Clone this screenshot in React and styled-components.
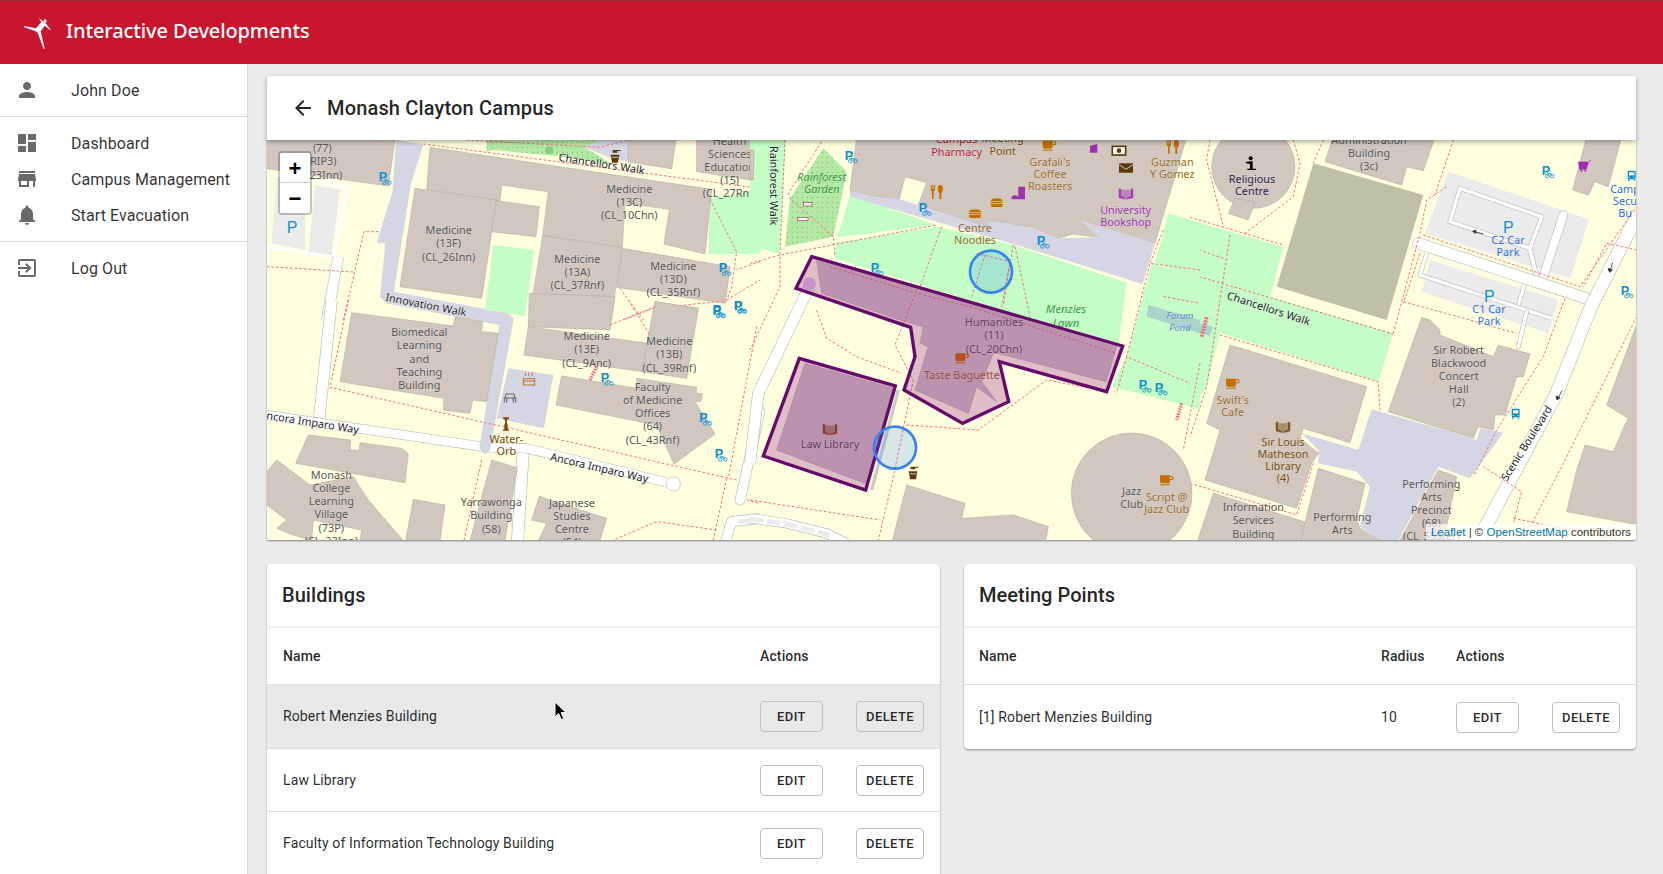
import React from "react";
import styled, { createGlobalStyle } from "styled-components";
import { MdPerson, MdDashboard, MdStore, MdNotifications, MdExitToApp, MdArrowBack } from "react-icons/md";

const Global = createGlobalStyle`
  html, body { margin: 0; padding: 0; height: 100%; overflow: hidden; background: #ebebeb; }
  body { font-family: Roboto, "Liberation Sans", sans-serif; }
  * { box-sizing: border-box; }
`;

const Page = styled.div`
  width: 1663px; height: 874px; display: flex; flex-direction: column; overflow: hidden; position: relative;
`;
const TopBar = styled.header`
  height: 64px; flex: none; background: #c8162e; display: flex; align-items: center; padding-left: 16px; gap: 3px;
  border-top: 1px solid #8f2a38;
`;
const Brand = styled.div`
  color: #fff; font-family: "Noto Sans", sans-serif; font-size: 20px; font-weight: 500; letter-spacing: -0.12px; white-space: nowrap;
  margin-top: -5px;
`;
const Body = styled.div`flex: 1; display: flex; min-height: 0;`;
const Sidebar = styled.nav`
  width: 248px; flex: none; background: #fff; border-right: 1px solid #dcdcdc;
`;
const NavGroup = styled.div`
  padding: 8px 0;
  border-bottom: ${p => (p.$last ? "none" : "1px solid #dcdcdc")};
`;
const NavItem = styled.div`
  height: 36px; display: flex; align-items: center; padding-left: 15px; gap: 32px;
  font-size: 16px; color: rgba(0, 0, 0, 0.82); letter-spacing: 0.1px;
  svg { width: 24px; height: 24px; color: #696969; flex: none; }
`;
const Main = styled.main`
  flex: 1; min-width: 0; padding: 12px 27px 0 19px; display: flex; flex-direction: column; overflow: hidden;
`;
const TitleCard = styled.div`
  height: 64px; flex: none; background: #fff; display: flex; align-items: center; padding-left: 24px; gap: 12px;
  position: relative; z-index: 2; border-radius: 2px 2px 0 0;
  box-shadow: 0 2px 5px rgba(0,0,0,0.32);
  font-size: 20px; font-weight: 500; color: rgba(0,0,0,0.87); letter-spacing: 0.16px;
  svg { width: 24px; height: 24px; color: rgba(0,0,0,0.85); }
`;
const MapWrap = styled.section`
  height: 400px; flex: none; position: relative; overflow: hidden; background: #ffffdf;
  box-shadow: 0 1px 2px rgba(0,0,0,0.45); border-radius: 0 0 2px 2px;
  > svg { display: block; }
`;
const Zoom = styled.div`
  position: absolute; left: 11px; top: 11px; width: 34px; border: 2px solid rgba(0,0,0,0.22); border-radius: 4px; background-clip: padding-box;
`;
const ZoomBtn = styled.div`
  height: 30px; padding-top: ${p => (p.$top ? 3 : 1)}px; background: #fff; display: flex; align-items: center; justify-content: center;
  font: bold 22px "Liberation Sans", sans-serif; color: #000; 
  border-bottom: ${p => (p.$top ? "1px solid #ccc" : "none")};
  border-radius: ${p => (p.$top ? "2px 2px 0 0" : "0 0 2px 2px")};
`;
const Attribution = styled.div`
  position: absolute; right: 0; bottom: 0; background: rgba(255,255,255,0.7); padding: 0 5px;
  font: 11.5px/16px "Liberation Sans", sans-serif; color: #333; white-space: nowrap;
`;
const OsmLink = styled.span`color: #0078a8;`;
const Columns = styled.div`
  margin-top: 24px; display: grid; grid-template-columns: 673px 672px; gap: 24px; align-items: start;
`;
const Card = styled.div`
  background: #fff; border-radius: 4px; box-shadow: 0 1px 2px rgba(0,0,0,0.38); overflow: hidden;
  padding-bottom: ${p => p.$tail || 0}px;
`;
const CardTitle = styled.h2`
  margin: 0; height: 64px; display: flex; align-items: center; padding-left: 15px; font-size: 20px; font-weight: 500;
  color: rgba(0,0,0,0.87); letter-spacing: 0.05px; border-bottom: 2px solid #f1f1f1;
`;
const Row = styled.div`
  display: grid; grid-template-columns: ${p => p.$cols}; align-items: center; height: ${p => p.$h || 63.7}px;
  padding-left: ${p => p.$pl || 16}px; padding-bottom: ${p => (p.$head ? 0 : 1)}px; font-size: 14px; color: rgba(0,0,0,0.85); letter-spacing: 0.13px;
  border-top: ${p => (p.$head ? "none" : "1px solid #dedede")};
  background: ${p => (p.$hover ? "#e8e8e8" : "transparent")};
  font-weight: ${p => (p.$head ? 500 : 400)};
`;
const Actions = styled.div`display: flex; justify-content: space-between; padding-right: 16px; margin-top: 1px;`;
const Btn = styled.button`
  height: 31px; width: ${p => p.$w}px; background: transparent; border: 1px solid #bfbfbf; border-radius: 4px; padding: 0;
  font: 500 13px Roboto, sans-serif; letter-spacing: 0.4px; color: rgba(0,0,0,0.85);
`;
const Pointer = styled.svg`position: absolute; left: 554px; top: 701px; z-index: 5;`;
const Lbl = styled.text`
  font-family: "Noto Sans", "Open Sans", sans-serif; font-size: ${p => p.$s || 32.5}px; fill: ${p => p.$c || "#555"};
  font-style: ${p => (p.$i ? "italic" : "normal")};
  text-anchor: ${p => p.$a || "middle"}; stroke: ${p => p.$h || "rgba(255,255,255,.25)"}; stroke-width: 3px; paint-order: stroke; 
`;

/* ---- map palette ---- */
const BLD = "#d1c7bf", BEDGE = "#b9afa7", GRN = "#c4fdc6", LAV = "#d5d5e3", DSH = "#ef7079", LOT = "#ebebeb", BLUE = "#0c8fd1";

const Bld = ({ p }) => <polygon points={p} fill={BLD} stroke={BEDGE} strokeWidth="2" />;
const Fill = ({ p, c }) => <polygon points={p} fill={c} />;
const Dash = ({ p, w = 3 }) => <polyline points={p} fill="none" stroke={DSH} strokeWidth={w} strokeDasharray="8 6" />;
const Road = ({ p, w = 32, cap = "butt" }) => (
  <g fill="none" strokeLinejoin="round" strokeLinecap={cap}>
    <polyline points={p} stroke="#bdbdbd" strokeWidth={Number(w) + 4} />
    <polyline points={p} stroke="#fff" strokeWidth={Number(w)} />
  </g>
);
const T = ({ x, y, lines, c, s, r, i, lh = 39.5, h }) => (
  <g transform={r ? `rotate(${r} ${x} ${y})` : undefined}>
    {lines.map((l, k) => (
      <Lbl key={k} x={x} y={y + 11 + k * lh} $c={c} $s={s} $i={i} $h={h}>{l}</Lbl>
    ))}
  </g>
);
const PBike = ({ x, y }) => (
  <g>
    <Lbl x={x} y={y + 29} $a="start" $c={BLUE} $s={38} $h="none" style={{ fontFamily: "Liberation Sans", fontWeight: 700 }}>P</Lbl>
    <g fill="none" stroke={BLUE} strokeWidth="2.4">
      <circle cx={x + 17} cy={y + 33} r="5.5" /><circle cx={x + 32} cy={y + 33} r="5.5" />
      <path d={`M${x + 17} ${y + 33}l7 -9 l8 9 M${x + 17} ${y + 25}h9`} />
    </g>
  </g>
);
const Park = ({ x, y }) => (
  <Lbl x={x} y={y} $c={BLUE} $s={48} $h="none" style={{ fontFamily: "Liberation Sans" }}>P</Lbl>
);
const Cup = ({ x, y, c = "#c17000" }) => (
  <g fill={c} transform={`translate(${x} ${y})`}>
    <path d="M-20 -16h30v16q0 8 -8 8h-14q-8 0 -8 -8z" />
    <path d="M10 -14h5q6 0 6 6t-6 6h-5v-3h4q3 0 3 -3t-3 -3h-4z" />
    <rect x="-20" y="11" width="30" height="3" />
  </g>
);
const Book = ({ x, y, c = "#734a08" }) => (
  <g transform={`translate(${x} ${y})`} fill={c}>
    <path d="M-21 -14l19 5v27l-19 -5zM21 -14l-19 5v27l19 -5z" fillOpacity=".9" stroke={c} strokeWidth="1" />
    <path d="M-15 -18l12 6v26l-12 -6zM15 -18l-12 6v26l12 -6z" fill="#d1c7bf" fillOpacity=".55" />
  </g>
);
const Burger = ({ x, y }) => (
  <g transform={`translate(${x} ${y})`} fill="#c17000">
    <path d="M-18 -4q0 -9 18 -9t18 9zM-18 -2h36v4h-36zM-18 4h36v3q0 6 -6 6h-24q-6 0 -6 -6z" />
  </g>
);
const Fork = ({ x, y }) => (
  <g transform={`translate(${x} ${y})`} fill="#c17000">
    <path d="M-18 -20h3v12h2v-12h3v12h2v-12h3v14q0 4 -4 5v22h-5v-22q-4 -1 -4 -5z" />
    <path d="M8 22v-18q-5 -4 -5 -12 0 -12 8 -12t8 12q0 8 -5 12v18z" />
  </g>
);
const Tap = ({ x, y }) => (
  <g transform={`translate(${x} ${y})`} fill="#5b3a0c">
    <path d="M-4 -18h24v3h-10v5h-14z" /><path d="M-10 -4h26l-4 24h-18z" /><path d="M-7 2h20v3h-20z" fill="#d1c7bf" />
  </g>
);
const Bus = ({ x, y }) => (
  <g transform={`translate(${x} ${y})`}>
    <rect x="-12" y="-14" width="24" height="26" rx="4" fill={BLUE} /><rect x="-8" y="-9" width="16" height="9" fill="#fff" />
    <circle cx="-7" cy="6" r="2" fill="#fff" /><circle cx="7" cy="6" r="2" fill="#fff" />
    <rect x="-11" y="12" width="5" height="4" fill={BLUE} /><rect x="6" y="12" width="5" height="4" fill={BLUE} />
  </g>
);

const ZoneA = () => (
  <g transform="translate(260 70) scale(.33333)">
    <Bld p="20,210 405,210 385,348 20,296" />
    <Fill c={GRN} p="1350,385 1500,360 1500,552 1345,552" />
    <Fill c="url(#mapDots)" p="680,210 1020,210 975,232 1060,285 890,258 700,240 680,245" />
    <circle cx="867" cy="241" r="12" fill="#8ccc7e" />
    <Fill c={LOT} p="35,520 50,318 135,332 135,540" />
    <Fill c={LOT} p="145,545 165,346 240,358 215,556" />
    <polyline points="20,530 220,562 262,350 40,316" fill="none" stroke="#fff" strokeWidth="9" />
    <Road p="235,560 200,750" w="30" />
    <Fill c={LAV} p="975,232 1020,210 1112,210 1105,275 1060,268" />
    <Fill c={LAV} p="408,210 490,222 452,345 402,665 745,730 762,748 740,760 380,700 360,680 376,520 350,520 398,362" />
    <Bld p="1105,210 1248,210 1235,296 1105,276" />
    <Bld p="1310,210 1500,210 1485,332 1310,305" />
    <Bld p="510,232 1355,358 1335,552 1212,522 1228,418 1095,400 1087,532 848,497 865,365 725,345 720,392 500,358" />
    <Bld p="465,355 710,390 665,685 420,650" />
    <Bld p="710,392 838,410 828,500 695,485" />
    <Bld p="848,497 1087,532 1050,760 805,760" />
    <Bld p="1087,535 1410,590 1396,700 1070,652" />
    <Bld p="1185,695 1315,715 1300,760 1180,760" />
    <Fill c={GRN} p="700,525 822,540 795,738 675,720" />
    <Dash p="490,222 1500,355" />
    <Dash p="620,210 1020,232 1105,210" />
    <Dash p="20,590 280,606" />
    <Dash p="250,750 312,485 360,485" />
    <Dash p="1350,388 1430,545 1415,650 1400,692 1180,715 1090,750" />
    <Dash p="1500,575 1430,600" />
    <Dash p="1080,655 1150,750" />
    <Dash p="1400,690 1500,630" />
    <T x={187} y={236} lines={["(77)"]} /><T x={190} y={275} lines={["RIP3)"]} /><T x={198} y={315} lines={["23Inn)"]} />
    <T x={566} y={482} lines={["Medicine", "(13F)", "(CL_26Inn)"]} />
    <T x={1108} y={357} lines={["Medicine", "(13C)", "(CL_10Chn)"]} />
    <T x={952} y={568} lines={["Medicine", "(13A)", "(CL_37Rnf)"]} />
    <T x={1240} y={588} lines={["Medicine", "(13D)", "(CL_35Rnf)"]} />
    <T x={1409} y={213} lines={["Health", "Sciences", "Education", "(15)", "(CL_27Rnf)"]} />
    <T x={1025} y={282} r={9} c="#222" lines={["Chancellors Walk"]} h="rgba(255,255,255,.6)" />
    <PBike x={356} y={305} /><PBike x={1376} y={578} /><PBike x={1358} y={705} /><PBike x={1422} y={692} />
    <Park x={96} y={490} />
    <Tap x={1062} y={258} />
  </g>
);

const ZoneB = () => (
  <g transform="translate(260 300) scale(.33333)">
    <Road p="215,0 178,352" w="32" />
    <Road p="790,450 772,730" w="34" />
    <Road p="20,345 680,442 800,445 1240,552" w="26" cap="round" />
    <circle cx="1240" cy="552" r="21" fill="#fff" stroke="#bdbdbd" strokeWidth="2" />
    <Road p="1500,335 1440,600" w="28" cap="round" />
    <Road p="1395,730 1415,665 1500,655" w="28" />
    <polyline points="1440,665 1490,660" stroke={LOT} strokeWidth="14" strokeLinecap="round" fill="none" />
    <Fill c={LAV} p="745,205 880,225 852,385 710,355" />
    <Fill c={LAV} p="380,0 745,45 760,62 690,452 675,462 658,445 718,75 370,8" />
    <Bld p="275,38 580,78 585,50 668,65 665,95 715,100 680,305 638,300 630,340 550,330 552,295 240,245" />
    <Bld p="808,-20 1065,-10 1050,90 805,80" />
    <Bld p="805,80 1165,130 1150,215 792,165" />
    <Bld p="1185,5 1315,25 1280,235 1145,215" />
    <Bld p="905,228 1130,265 1130,235 1310,262 1308,278 1328,282 1322,305 1305,305 1365,402 1242,492 1190,375 888,315" />
    <Bld p="145,405 272,420 270,450 298,450 300,428 425,445 445,462 435,548 107,490" />
    <Bld p="20,515 50,480 150,555 280,530 325,600 430,722 300,722 305,690 160,660 155,722 85,700 50,685 80,660 20,615" />
    <Bld p="460,598 555,615 540,722 437,722" />
    <Bld p="695,480 772,503 735,722 630,722" />
    <Bld p="838,588 870,600 1040,655 1020,722 835,722 860,670 815,660" />
    <Dash p="265,0 210,262 1430,540" />
    <Dash p="665,480 612,720" />
    <Dash p="1400,535 1360,720" />
    <Dash p="1490,80 1405,535" />
    <Dash p="1370,690 1190,665 1060,720" />
    <Dash p="1105,0 1170,105" />
    <Dash p="1050,75 1185,20" />
    <Dash p="1460,600 1500,610" />
    <polyline points="1010,200 990,240" stroke={DSH} strokeWidth="10" strokeDasharray="5 3" fill="none" />
    <T x={498} y={15} r={11} c="#222" lines={["Innovation Walk"]} h="rgba(255,255,255,.6)" />
    <T x={478} y={98} lines={["Biomedical", "Learning", "and", "Teaching", "Building"]} />
    <T x={980} y={110} lines={["Medicine", "(13E)", "(CL_9Anc)"]} />
    <T x={1228} y={125} lines={["Medicine", "(13B)", "(CL_39Rnf)"]} />
    <T x={1178} y={262} lines={["Faculty", "of Medicine", "Offices", "(64)", "(CL_43Rnf)"]} />
    <T x={214} y={526} lines={["Monash", "College", "Learning", "Village", "(73P)", "(CL_23Inn)"]} />
    <T x={694} y={608} lines={["Yarrawonga", "Building", "(58)"]} />
    <T x={936} y={610} lines={["Japanese", "Studies", "Centre", "(54)"]} />
    <T x={158} y={368} r={9} c="#222" lines={["ncora Imparo Way"]} h="rgba(255,255,255,.7)" />
    <T x={1018} y={504} r={13} c="#222" lines={["Ancora Imparo Way"]} h="rgba(255,255,255,.7)" />
    <T x={739} y={418} c="#734a08" lh={35} lines={["Water-", "Orb"]} />
    <g fill="none" stroke="#6a6a6a" strokeWidth="3.5">
      <path d="M738 282h24M730 294h40M738 282l-6 26M762 282l6 26M742 294l-3 14M758 294l3 14" />
    </g>
    <g fill="#734a08">
      <path d="M729 352h18v4h-18zM729 388h18v4h-18zM733 356h10l-3 10 3 10v12h-10v-12l3 -10z" />
    </g>
    <g fill="none" stroke="#b07a30" strokeWidth="3"><rect x="790" y="236" width="34" height="19" /><path d="M790 243h34M797 218q-4 5 0 10M807 218q-4 5 0 10M817 218q-4 5 0 10" /></g>
    <PBike x={1022} y={217} /><PBike x={1358} y={13} /><PBike x={1422} y={0} /><PBike x={1318} y={337} /><PBike x={1364} y={445} />
  </g>
);

const ZoneC = () => (
  <g transform="translate(750 130) scale(.33333)">
    <Fill c={GRN} p="0,30 108,30 88,372 0,345" />
    <Fill c={GRN} p="262,322 300,195 560,285" />
    <Fill c={GRN} p="252,375 258,338 562,290 790,345 1130,458 1105,650 255,385" />
    <Fill c={GRN} p="1255,250 1350,278 1350,445 1215,400" />
    <Fill c={GRN} p="1205,400 1350,445 1350,838 1085,770 1130,680" />
    <Fill c="#a9d5cc" p="1195,525 1350,570 1350,610 1190,560" />
    <Bld p="0,60 12,60 10,150 0,150" />
    <Fill c="url(#mapDots)" p="220,55 290,125 250,320 105,350 120,205" />
    <Bld p="320,20 1310,20 1215,340 990,270 1045,322 968,312 925,325 850,293 715,272 712,290 505,225 530,158 465,140 448,208 380,200 300,183" />
    <Fill c={LAV} p="300,183 380,200 448,208 505,225 712,290 715,272 850,293 925,325 1045,322 990,270 1215,340 1178,462 800,345 300,200" />
    <Road p="178,470 25,790 0,1000" w="32" />
    <Fill c="#c9c9c9" p="440,780 450,780 370,1080 360,1080" />
    <Bld p="200,392 1100,650 1068,755 745,670 730,670 695,755 740,815 680,770 655,850 495,780 535,650 510,640 520,590 465,575 215,490" />
    <Bld p="165,700 430,775 345,1060 80,960" />
    <circle cx="178" cy="462" r="20" fill="#e3c7e3" />
    <circle cx="1145" cy="1090" r="181" fill={BLD} stroke={BEDGE} strokeWidth="2" />
    <Bld p="470,1065 645,1120 635,1165 790,1155 895,1190 885,1240 425,1240" />
    <Road p="0,1165 110,1180 230,1210 290,1240" w="26" />
    <polyline points="0,1167 110,1182 240,1215" stroke={LOT} strokeWidth="14" strokeDasharray="40 12" fill="none" />
    <Dash p="0,400 90,375 560,285" />
    <Dash p="215,35 115,190 120,205 250,320 255,380" />
    <Dash p="105,30 90,370 90,470 0,660" />
    <Dash p="575,290 510,470" />
    <Dash p="710,360 665,500" />
    <Dash p="790,345 755,530" />
    <Dash p="795,350 840,560" />
    <Dash p="680,370 780,395 760,530" />
    <Dash p="200,540 230,625 320,680 455,730" />
    <Dash p="500,480 435,645 490,750 430,1040 385,1230" />
    <Dash p="470,885 685,900 890,750 1075,785" />
    <Dash p="660,530 1100,670" />
    <Dash p="240,410 500,490 660,530" />
    <Dash p="1350,420 1200,400 1130,680 1320,760" />
    <Dash p="1240,300 1200,400" />
    <Dash p="1350,700 1300,960" />
    <Dash p="1130,680 1100,790" />
    <Dash p="0,1110 390,1170" />
    <Dash p="1240,500 1350,520" />
    <polyline points="1295,820 1280,870" stroke={DSH} strokeWidth="10" strokeDasharray="5 3" fill="none" />
    <Lbl x={61} y={48} transform="rotate(90 61 48)" $a="start" $c="#222" $h="rgba(255,255,255,.6)">Rainforest Walk</Lbl>
    <T x={215} y={143} c="#2e9b3a" i lh={36} lines={["Rainforest", "Garden"]} />
    <T x={620} y={28} c="#b3173c" lh={39} lines={["Campus", "Pharmacy"]} />
    <T x={758} y={24} c="#734a08" lh={39} lines={["Meeting", "Point"]} />
    <T x={900} y={98} c="#9a6a28" lh={36} lines={["Grafali's", "Coffee", "Roasters"]} />
    <T x={1267} y={98} c="#9a6a28" lh={36} lines={["Guzman", "Y Gomez"]} />
    <T x={1127} y={242} c="#a02eb0" lh={36} lines={["University", "Bookshop"]} />
    <T x={675} y={296} c="#9a6a28" lh={36} lines={["Centre", "Noodles"]} />
    <T x={948} y={537} c="#2e9b3a" i lh={42} s={34} lines={["Menzies", "Lawn"]} />
    <T x={1290} y={555} c="#5b7fc7" i lh={36} s={28} lines={["Forum", "Pond"]} />
    <T x={732} y={578} lines={["Humanities", "(11)", "(CL_20Chn)"]} />
    <T x={636} y={737} c="#9a6a28" lines={["Taste Baguette"]} />
    <T x={240} y={943} lines={["Law Library"]} />
    <T x={1145} y={1085} lh={38} lines={["Jazz", "Club"]} />
    <T x={1250} y={1103} c="#9a6a28" lh={36} lines={["Script @", "Jazz Club"]} />
    <Cup x={898} y={48} /><Cup x={636} y={686} /><Cup x={1250} y={1052} />
    <Fork x={560} y={185} /><Fork x={1268} y={50} /><Burger x={740} y={218} /><Burger x={675} y={251} />
    <Book x={1128} y={190} c="#a02eb0" /><Book x={240} y={897} />
    <path d="M1020 48l22 -6 v26h-22z" fill="#a02eb0" />
    <rect x="1087" y="49" width="40" height="26" fill="#fff" stroke="#5b3a0c" strokeWidth="5" /><circle cx="1107" cy="62" r="7" fill="#5b3a0c" />
    <path d="M1107 100h42v28h-42z" fill="#5b3a0c" /><path d="M1107 104l21 14 21 -14" fill="none" stroke="#d1c7bf" strokeWidth="3" />
    <path d="M805 170h20v38h-20zM785 200q10 -8 20 0v8h-20z" fill="#a02eb0" />
    <rect x="160" y="218" width="26" height="10" fill="#fff" stroke="#a33" strokeWidth="2" />
    <rect x="142" y="262" width="32" height="10" fill="#fff" stroke="#a33" strokeWidth="2" />
    <Tap x={486} y={1028} />
    <PBike x={284} y={60} /><PBike x={506} y={218} /><PBike x={860} y={316} /><PBike x={362} y={397} /><PBike x={1166} y={748} /><PBike x={1214} y={756} />
    <polygon points="185,380 1118,648 1070,785 748,695 776,815 638,880 462,780 495,680 482,592 138,475" fill="rgba(128,0,128,.26)" stroke="#660a6b" strokeWidth="10" strokeLinejoin="miter" />
    <polygon points="148,685 436,768 347,1080 40,978" fill="rgba(128,0,128,.26)" stroke="#660a6b" strokeWidth="10" strokeLinejoin="miter" />
    <circle cx="723" cy="425" r="63" fill="rgba(56,136,255,.2)" stroke="#3a82ee" strokeWidth="8" />
    <circle cx="435" cy="953" r="63" fill="rgba(56,136,255,.2)" stroke="#3a82ee" strokeWidth="8" />
  </g>
);

const ZoneD = () => (
  <g transform="translate(1190 130) scale(.33333)">
    <Fill c={GRN} p="0,270 280,350 240,500 610,610 565,755 90,610 50,770 0,835" />
    <Fill c="#bfc0a8" p="370,100 700,195 590,570 260,470" />
    <Fill c={LOT} p="775,125 1198,268 1140,445 1060,420 705,310" />
    <Fill c={LOT} p="720,390 1105,510 1075,610 695,485" />
    <Fill c="#a9d5cc" p="0,575 70,590 60,618 0,600" />
    <polyline points="35,620 50,562" stroke={DSH} strokeWidth="12" strokeDasharray="6 3" fill="none" />
    <polygon points="810,175 1055,260 1020,355 780,275" fill="none" stroke="#bdbdbd" strokeWidth="14" />
    <polygon points="810,175 1055,260 1020,355 780,275" fill="none" stroke="#fff" strokeWidth="10" />
    <Road p="1120,255 1060,440" w="24" cap="round" />
    <Road p="1020,360 1040,440" w="12" />
    <Road p="710,370 690,435 1085,565" w="10" />
    <Road p="1005,460 985,525" w="10" />
    <Road p="1010,545 985,650" w="10" cap="round" />
    <Road p="685,340 1205,510" w="32" cap="round" />
    <Road p="1345,250 1205,525 1100,790 860,1240" w="38" />
    <circle cx="190" cy="110" r="125" fill={BLD} stroke={BEDGE} strokeWidth="2" />
    <Bld p="135,205 115,250 175,270 195,215" />
    <Bld p="430,20 735,20 700,122 650,110 635,165 405,95" />
    <Bld p="695,562 720,570 750,600 750,615 910,680 925,645 1020,672 1000,740 980,740 945,855 915,855 910,900 865,890 850,925 595,845" />
    <Fill c={LAV} p="545,838 780,905 860,930 870,895 940,908 840,1045 745,1010 620,1240 590,1240 510,1190 540,1070 500,1025 385,1000 385,960 335,910 505,960" />
    <Bld p="120,645 530,770 480,938 340,895 330,925 385,970 365,1000 320,1135 45,1050 90,900 50,880" />
    <Bld p="70,1090 358,1180 345,1240 20,1240" />
    <Bld p="385,1015 525,1060 500,1170 510,1195 590,1240 330,1240" />
    <Bld p="745,1020 800,1040 760,1240 625,1240" />
    <Bld p="1190,20 1295,20 1255,170 1215,155 1195,195 1148,180" />
    <Bld p="1345,570 1250,825 1315,865 1300,895 1270,965 1185,945 1160,1020 1130,1145 1345,1185" />
    <Dash p="0,262 280,345" />
    <Dash p="610,610 690,310 710,210 770,170" />
    <Dash p="0,432 610,612" />
    <Dash p="90,615 565,755 570,840" />
    <Dash p="0,350 100,385" />
    <Dash p="120,315 50,770 0,920" />
    <Dash p="30,290 0,370" />
    <Dash p="60,30 50,90 100,290" />
    <Dash p="310,30 330,100 310,200 165,310" />
    <Dash p="400,30 370,100" />
    <Dash p="790,30 735,195" />
    <Dash p="690,370 640,520" />
    <Dash p="700,315 1170,470 1340,230" />
    <Dash p="640,515 840,570 980,610" />
    <Dash p="1125,505 1060,680 920,900 850,1040" />
    <Dash p="1340,360 1250,340 1180,470" />
    <Dash p="1340,560 1120,1000 1000,1230" />
    <Dash p="880,1010 995,1085 970,1180" />
    <Dash p="970,1165 1340,1240" />
    <Dash p="0,1060 320,1155 370,1000" />
    <T x={537} y={30} lines={["Administration", "Building", "(3c)"]} />
    <T x={186} y={148} c="#1c1c4a" lh={36} lines={["Religious", "Centre"]} />
    <T x={236} y={536} r={18} c="#222" lines={["Chancellors Walk"]} h="rgba(255,255,255,.5)" />
    <T x={806} y={660} lines={["Sir Robert", "Blackwood", "Concert", "Hall", "(2)"]} />
    <T x={128} y={811} c="#9a6a28" lh={36} lines={["Swift's", "Cafe"]} />
    <T x={279} y={936} c="#734a08" lh={36} lines={["Sir Louis", "Matheson", "Library", "(4)"]} />
    <T x={190} y={1133} lines={["Information", "Services", "Building"]} />
    <T x={457} y={1163} lines={["Performing", "Arts"]} />
    <T x={724} y={1062} lines={["Performing", "Arts", "Precinct", "(68)", "(CL_55Ster)"]} />
    <T x={954} y={330} c="#2d6fd8" lh={36} lines={["C2 Car", "Park"]} />
    <T x={897} y={538} c="#2d6fd8" lh={36} lines={["C1 Car", "Park"]} />
    <T x={1305} y={178} c="#2d6fd8" lh={36} lines={["Camp", "Secu", "Bu"]} />
    <T x={1010} y={940} r={-58} c="#222" lines={["Scenic Boulevard"]} h="rgba(255,255,255,.7)" />
    <Park x={955} y={310} /><Park x={898} y={515} />
    <PBike x={1055} y={105} /><PBike x={1292} y={465} />
    <Bus x={1325} y={136} /><Bus x={977} y={850} />
    <Cup x={128} y={762} /><Book x={279} y={890} />
    <path d="M1165 96h30l-6 22h-20zM1195 96l8 -5" fill="#a02eb0" stroke="#a02eb0" strokeWidth="2" />
    <circle cx="1174" cy="122" r="3" fill="#a02eb0" /><circle cx="1186" cy="122" r="3" fill="#a02eb0" />
    <g fill="#000">
      <circle cx="182" cy="85" r="6" />
      <path d="M168 96l14 -2 6 0 v22h10v4h-26v-4h8v-14l-12 -2z" />
    </g>
    <g stroke="#333" strokeWidth="2.5" fill="#333">
      <path d="M880 312l-30 -8M858 300l-10 4 8 6z" />
      <path d="M1268 398l-8 26M1254 415l5 12 8 -7z" />
      <path d="M1116 782l-14 26M1098 798l3 12 9 -7z" />
    </g>
  </g>
);

const MapDrawing = () => (
  <svg width="1369" height="400" viewBox="267 140 1369 400" xmlns="http://www.w3.org/2000/svg">
    <defs>
      <pattern id="mapDots" width="15" height="15" patternUnits="userSpaceOnUse">
        <rect width="15" height="15" fill="#b4e9a4" />
        <circle cx="7" cy="7" r="1.5" fill="#6f9f62" />
      </pattern>
    </defs>
    <rect x="267" y="140" width="1369" height="400" fill="#ffffdf" />
    <ZoneA /><ZoneB /><ZoneD /><ZoneC />
  </svg>
);

const Logo = () => (
  <svg width="48" height="48" viewBox="0 0 144 144" fill="#fff" aria-hidden="true" style={{ marginLeft: -1, flex: "none" }}>
    <circle cx="90" cy="36" r="5" />
    <path d="M73 28l13 12 5 1 16 21 -1 2 -17 -14 -12 17 12 52 -3 1 -18 -49 -6 -4 -34 -12 -2 -3 1 -1 36 7 16 -18 -7 -12z" />
  </svg>
);

const App = () => (
  <Page>
    <Global />
    <TopBar>
      <Logo />
      <Brand>Interactive Developments</Brand>
    </TopBar>
    <Body>
      <Sidebar>
        <NavGroup><NavItem><MdPerson />John Doe</NavItem></NavGroup>
        <NavGroup>
          <NavItem><MdDashboard />Dashboard</NavItem>
          <NavItem><MdStore />Campus Management</NavItem>
          <NavItem><MdNotifications />Start Evacuation</NavItem>
        </NavGroup>
        <NavGroup $last><NavItem><MdExitToApp />Log Out</NavItem></NavGroup>
      </Sidebar>
      <Main>
        <TitleCard><MdArrowBack />Monash Clayton Campus</TitleCard>
        <MapWrap>
          <MapDrawing />
          <Zoom>
            <ZoomBtn $top>+</ZoomBtn>
            <ZoomBtn>−</ZoomBtn>
          </Zoom>
          <Attribution><OsmLink>Leaflet</OsmLink> | © <OsmLink>OpenStreetMap</OsmLink> contributors</Attribution>
        </MapWrap>
        <Columns>
          <Card $tail={40}>
            <CardTitle>Buildings</CardTitle>
            <Row $head $h={56} $cols="477px 1fr">
              <span>Name</span><span>Actions</span>
            </Row>
            <Row $hover $cols="477px 1fr">
              <span>Robert Menzies Building</span>
              <Actions><Btn $w={63}>EDIT</Btn><Btn $w={68}>DELETE</Btn></Actions>
            </Row>
            <Row $cols="477px 1fr">
              <span>Law Library</span>
              <Actions><Btn $w={63}>EDIT</Btn><Btn $w={68}>DELETE</Btn></Actions>
            </Row>
            <Row $cols="477px 1fr">
              <span>Faculty of Information Technology Building</span>
              <Actions><Btn $w={63}>EDIT</Btn><Btn $w={68}>DELETE</Btn></Actions>
            </Row>
          </Card>
          <Card>
            <CardTitle>Meeting Points</CardTitle>
            <Row $head $pl={15} $h={56} $cols="402px 75px 1fr">
              <span>Name</span><span>Radius</span><span>Actions</span>
            </Row>
            <Row $pl={15} $h={65} $cols="402px 75px 1fr">
              <span>[1] Robert Menzies Building</span><span>10</span>
              <Actions><Btn $w={63}>EDIT</Btn><Btn $w={68}>DELETE</Btn></Actions>
            </Row>
          </Card>
        </Columns>
      </Main>
    </Body>
    <Pointer width="14" height="20" viewBox="0 0 14 20"><path d="M1 1v15l3.6-3.4 2.6 6 2.6-1-2.6-6H12z" fill="#000" stroke="#fff" strokeWidth="1" /></Pointer>
  </Page>
);

export default App;
